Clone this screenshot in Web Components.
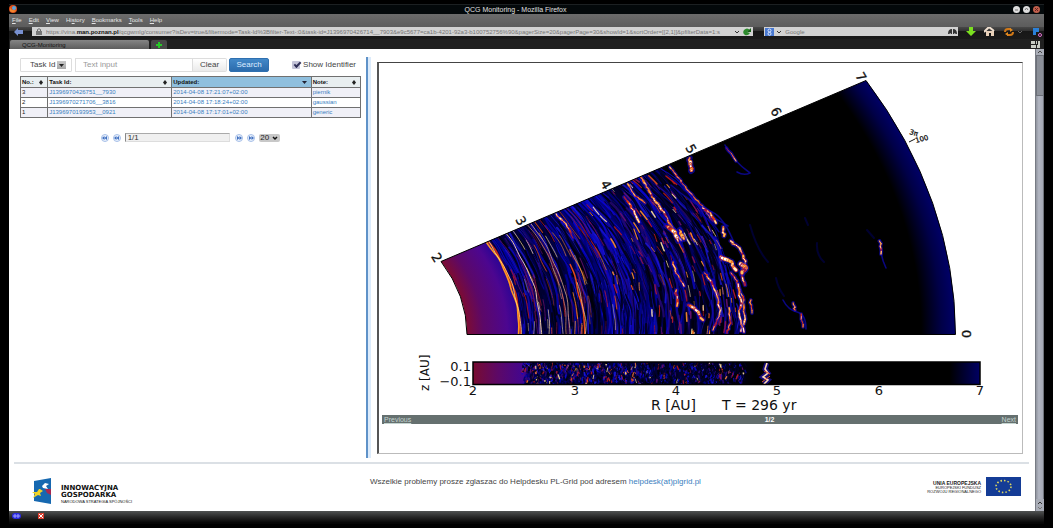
<!DOCTYPE html>
<html lang="en">
<head>
<meta charset="utf-8">
<title>QCG Monitoring - Mozilla Firefox</title>
<style>
html{height:100%;background:#000}
body{margin:0;min-height:100%;display:flex;background:#000;font-family:"Liberation Sans",Arial,sans-serif;font-size:8px;line-height:10px;color:#444}
qcg-window{flex:1}
</style>
</head>
<body>
<qcg-window>
  <qcg-titlebar slot="chrome">QCG Monitoring - Mozilla Firefox</qcg-titlebar>
  <qcg-menubar slot="chrome"></qcg-menubar>
  <qcg-navbar slot="chrome"></qcg-navbar>
  <qcg-tabs slot="chrome">QCG-Monitoring</qcg-tabs>
  <qcg-workspace>
    <qcg-search slot="side"></qcg-search>
    <qcg-tasks slot="side"></qcg-tasks>
    <qcg-pager slot="side"></qcg-pager>
    <qcg-gallery slot="main"><qcg-plot></qcg-plot></qcg-gallery>
  </qcg-workspace>
  <qcg-footer></qcg-footer>
  <qcg-scrollbar slot="scroll"></qcg-scrollbar>
  <qcg-status slot="status"></qcg-status>
</qcg-window>
<script>
const define = (name, html, setup) => customElements.define(name, class extends HTMLElement {
  constructor() {
    super();
    this.attachShadow({mode: 'open'}).innerHTML = '<style>*,:host{box-sizing:border-box}:host{display:block}a{color:#3a80c0;text-decoration:none}button,input,select{font:inherit;margin:0}svg{display:block}</style>' + html;
    if (setup) setup(this.shadowRoot);
  }
});

define('qcg-window', `<style>
:host{display:flex;flex-direction:column;padding:4px 9px 4px;background:#000;position:relative}
.body{flex:1;display:flex;background:#fff;min-height:0}
.page{flex:1;display:flex;flex-direction:column;min-width:0}
</style>
<slot name="chrome"></slot>
<div class="body"><div class="page"><slot></slot></div><slot name="scroll"></slot></div>
<slot name="status"></slot>`);

define('qcg-titlebar', `<style>
:host{display:flex;align-items:center;height:10px;background:#04090b;border-top:1px solid #1c2022;color:#e0e0e0;font-size:7px;line-height:8px}
h1{flex:1;margin:0;font:inherit;text-align:center}
.ctl{display:flex;gap:3px;padding-right:4px}
button{width:7px;height:7px;border:0;padding:0;border-radius:4px;background:#ddd;color:#555;line-height:0}
button.x{background:#c0604c}
</style>
<svg width="9" height="9" viewBox="0 0 9 9"><circle cx="4" cy="4" r="4" fill="#e0501c"/><circle cx="5" cy="3" r="2" fill="#58a8e0"/><path d="M1 2Q2 6 7 5Q5 9 1 6Z" fill="#f08830"/></svg>
<h1><slot></slot></h1>
<div class="ctl"><button aria-label="Minimize"><svg width="7" height="7"><path d="M2 4H5" stroke="#777"/></svg></button><button aria-label="Maximize"><svg width="7" height="7"><path d="M2 4L3.5 2L5 4" stroke="#777" fill="none"/></svg></button><button class="x" aria-label="Close"><svg width="7" height="7"><path d="M2 2L5 5M5 2L2 5" stroke="#622"/></svg></button></div>`);

define('qcg-menubar', `<style>
:host{display:block;height:13px;background:linear-gradient(#6c6c6c,#5c5c5c);color:#e4e4e4;font-size:6px}
nav{display:flex;gap:7px;padding:0 3px;line-height:11px;height:13px}
button{border:0;background:none;padding:0;color:inherit}
u{text-underline-offset:1px}
</style><nav><button><u>F</u>ile</button><button><u>E</u>dit</button><button><u>V</u>iew</button><button>Hi<u>s</u>tory</button><button><u>B</u>ookmarks</button><button><u>T</u>ools</button><button><u>H</u>elp</button></nav>`);

define('qcg-navbar', `<style>
:host{display:flex;align-items:center;height:12px;background:linear-gradient(#484848,#303030 35%,#171717 36%,#1a1a1a);padding:0 2px 3px 4px}
button{border:0;background:none;padding:0;line-height:0}
.field{display:flex;align-items:center;height:9px;background:#d2d2d2;color:#777;font-size:6px;line-height:8px;min-width:0}
.url{flex:721;margin-left:8px;padding:0 1px 0 4px;gap:4px}
.search{flex:193;margin-left:11px;padding:0 1px;gap:3px}
.addr{flex:1;min-width:0;white-space:nowrap;overflow:hidden;padding:0 3px 0 0}
.addr b{color:#111}
input{flex:1;min-width:0;border:0;background:none;padding:0;color:#777;height:8px}
.icons{display:flex;gap:8px;align-items:center;padding-left:8px}
</style>
<button aria-label="Back"><svg width="11" height="8" viewBox="0 0 11 8"><path d="M1 4L5 0V2H10V6H5V8Z" fill="#7890d0"/></svg></button>
<div class="field url"><svg width="6" height="7" viewBox="0 0 6 7"><path d="M1.500 3V1.500Q3 0 4.500 1.500V3" fill="none" stroke="#666"/><path d="M0 3H6V7H0Z" fill="#777"/></svg>
<div class="addr">https://vina.<b>man.poznan.pl</b>/qcgwmlg/consumer?isDev=true&amp;filtermode=Task-Id%3Bfilter-Text-:0&amp;task-id=J1396970426714__7903&amp;e9c5677=ca1b-4201-92a3-b100752756%90&amp;pagerSize=20&amp;pagerPage=30&amp;showId=1&amp;sortOrder=[[2,1]]&amp;pfilterData=1:s</div>
<svg width="18" height="8" viewBox="0 0 18 8"><path d="M1 3L3 5L5 3" fill="none" stroke="#333"/><path d="M16 2Q13-1 10 2Q8 5 11 7Q14 8 16 5L13 4Z" fill="#2c8a2c"/><path d="M17 0V4H13Z" fill="#166016"/></svg></div>
<div class="field search"><svg width="17" height="8" viewBox="0 0 17 8"><path d="M0 0H9V8H0Z" fill="#4878d0"/><circle cx="4.500" cy="2.500" r="1.500" fill="none" stroke="#dce8ff"/><circle cx="4.500" cy="5.800" r="1.500" fill="none" stroke="#dce8ff"/><path d="M12 3L14 5L16 3" fill="none" stroke="#333"/></svg><input aria-label="Search the web" value="Google"><svg width="9" height="7" viewBox="0 0 9 7"><path d="M0 6Q0 1 4 1V6H3Q2 4 1.500 6ZM9 6Q9 1 5 1V6H6Q7 4 7.500 6Z" fill="#333"/></svg></div>
<div class="icons">
<button aria-label="Downloads"><svg width="10" height="9" viewBox="0 0 10 9"><path d="M3 0H7V4H10L5 9L0 4H3Z" fill="#7be020"/></svg></button>
<button aria-label="Home"><svg width="12" height="9" viewBox="0 0 12 9"><path d="M2 4H10V9H7V6H5V9H2Z" fill="#e8d0b8"/><path d="M0 5L5 0L10 4" fill="none" stroke="#f0e0d0" stroke-width="2"/></svg></button>
<button aria-label="Refresh"><svg width="20" height="8" viewBox="0 0 20 8"><path d="M1 4Q1 1 4 1H7M9 4Q9 7 6 7H3" stroke="#d07818" stroke-width="2" fill="none"/><path d="M6 0L9 2L6 4ZM4 4L1 6L4 8Z" fill="#e08a20"/><path d="M14 3L16 5L18 3" stroke="#666" fill="none"/></svg></button>
<button aria-label="Add-on"><svg width="10" height="10" viewBox="0 0 10 10"><path d="M1 1H7V5H4V8H1Z" fill="#2a80d8"/><circle cx="8" cy="8" r="1.500" fill="none" stroke="#e070d0"/></svg></button>
</div>`);

define('qcg-tabs', `<style>
:host{display:flex;align-items:end;height:10px;background:#202020;padding:0 3px 0 1px;font-size:6px;color:#111}
.tab{flex:0 0 139px;height:9px;line-height:8px;padding:0 0 0 12px;text-align:left;border:0;background:linear-gradient(#858585,#5c5c5c);border-radius:2px 2px 0 0;color:inherit}
.add{width:16px;height:9px;margin-left:2px;border:0;padding:0 4px;background:#484848;border-radius:2px 2px 0 0}
.all{margin-left:auto}
</style><button class="tab"><slot></slot></button><button class="add" aria-label="New tab"><svg width="8" height="8"><path d="M4 1V7M1 4H7" stroke="#28c828" stroke-width="2"/></svg></button>
<svg class="all" width="10" height="8"><path d="M0 0H4V3H0ZM5 0H6V3H5ZM7 0H9V7H6V4H7ZM0 4H5V7H0Z" fill="#c8ccc4"/></svg>`);

define('qcg-scrollbar', `<style>
:host{display:flex;flex-direction:column;flex:0 0 9px;background:#8e929a;border-left:1px solid #777b84}
svg{background:#a8acb6}
.thumb{flex:0 0 41px;background:#8b8f98;border:1px solid #6c7078;border-width:1px 1px}
.track{flex:1;background:linear-gradient(90deg,#90949e,#b2b6c2 40%,#a4a8b4);border-right:1px solid #70747c}
</style><svg width="8" height="6"><path d="M2 4L4 2L6 4" stroke="#444" fill="none"/></svg><div class="thumb"></div><div class="track"></div><svg width="8" height="12"><path d="M2 5L4 3L6 5" stroke="#333" fill="none"/><path d="M2 8L4 10L6 8" stroke="#777" fill="none"/></svg>`);

define('qcg-status', `<style>
:host{display:flex;align-items:start;gap:16px;height:13px;padding:1px 3px;background:linear-gradient(#505252,#282828 45%,#060606 90%)}
</style><svg width="10" height="8" viewBox="0 0 10 8"><rect y="1" width="9" height="6" rx="3" fill="#2a2ae0"/><path d="M1 4H8M3 2V6M6 2V6" stroke="#a0a0ff"/></svg><svg width="6" height="8" viewBox="0 0 6 8"><rect y="1" width="6" height="6" fill="#d84030"/><path d="M1 2L5 6M5 2L1 6" stroke="#fff"/></svg>`);

define('qcg-workspace', `<style>
:host{display:grid;grid-template-columns:minmax(0,357fr) 5px minmax(0,664fr);flex:1;padding-top:8px}
.side{padding:1px 5px 0 11px}
.bar{background:linear-gradient(90deg,#5f92c8 2px,#dcebfb 2px);margin-bottom:4px}
.main{padding:5px 12px 8px 6px;display:flex;flex-direction:column}
</style><div class="side"><slot name="side"></slot></div><div class="bar"></div><div class="main"><slot name="main"></slot></div>`);

define('qcg-search', `<style>
form{display:flex;height:14px;font-size:8px}
.kind{display:flex;flex:0 0 52px;margin-right:3px;border:1px solid #ddd;border-radius:1px}
select{flex:1;min-width:0;appearance:none;border:0;padding:0 0 0 9px;color:#444;background:linear-gradient(#c8c8c8,#a8a8a8) right 5px center/9px 8px no-repeat;line-height:12px}
.kind{position:relative}
.kind svg{position:absolute;right:5px;top:2px;pointer-events:none}
.text{flex:1;min-width:0;border:1px solid #ddd;padding:0 7px}
.text::placeholder{color:#999}
button{border:1px solid #ddd;padding:0;line-height:12px}
.clear{flex:0 0 34px;border-left:0;background:linear-gradient(#fff,#eaeaea);color:#444;border-radius:0 2px 2px 0}
.go{flex:0 0 40px;margin-left:2px;border-color:#2f70b0;background:linear-gradient(#4288c8,#2b6bac);color:#dcecff;border-radius:2px}
label{display:flex;align-items:center;gap:3px;margin:0 5px 0 23px;white-space:nowrap}
input[type=checkbox]{appearance:none;width:8px;height:8px;background:#c4c4d8;border-radius:1px;display:grid}
input[type=checkbox]::after{content:"";width:5px;height:2px;border:solid #303058;border-width:0 0 2px 2px;transform:translate(2px,1px) rotate(-45deg)}
</style><form onsubmit="return false"><span class="kind"><select aria-label="Search field"><option>Task Id</option></select><svg width="9" height="8"><path d="M2 3H7L4.500 6Z" fill="#222"/></svg></span><input class="text" aria-label="Search text" placeholder="Text input"><button class="clear" type="reset">Clear</button><button class="go">Search</button><label><input type="checkbox" checked>Show Identifier</label></form>`);

define('qcg-tasks', `<style>
:host{margin-top:4px}
table{width:100%;border-collapse:collapse;table-layout:fixed;border:1px solid #2a3038;font-size:6px;line-height:9px}
th,td{height:10px;padding:0 1px;text-align:left;border:1px solid #707070;white-space:nowrap;overflow:hidden}
th{color:#111;background:#e8eef0;height:11px}
th.on{background:#8fbfde}
th div{display:flex;justify-content:space-between;align-items:center;padding-right:3px}
tbody tr:nth-child(odd){background:#f0f0f7}
td:first-child{color:#222}
</style><table><colgroup><col style="width:8%"><col style="width:36.500%"><col style="width:41%"><col></colgroup>
<thead><tr><th><div>No.:<svg width="4" height="5"><path d="M0 2.500L2 0L4 2.500L2 5Z" fill="#222"/></svg></div></th><th><div>Task Id:<svg width="4" height="5"><path d="M0 2.500L2 0L4 2.500L2 5Z" fill="#222"/></svg></div></th><th class="on"><div>Updated:<svg width="5" height="4"><path d="M0 1H5L2.500 4Z" fill="#223"/></svg></div></th><th><div>Note:<svg width="4" height="5"><path d="M0 2.500L2 0L4 2.500L2 5Z" fill="#222"/></svg></div></th></tr></thead>
<tbody><tr><td>3</td><td><a href="#">J1396970426751__7930</a></td><td><a href="#">2014-04-08 17:21:07+02:00</a></td><td><a href="#">piernik</a></td></tr>
<tr><td>2</td><td><a href="#">J1396970271706__3816</a></td><td><a href="#">2014-04-08 17:18:24+02:00</a></td><td><a href="#">gaussian</a></td></tr>
<tr><td>1</td><td><a href="#">J1396970193953__0921</a></td><td><a href="#">2014-04-08 17:17:01+02:00</a></td><td><a href="#">generic</a></td></tr></tbody></table>`);

define('qcg-pager', `<style>
:host{display:flex;justify-content:center;align-items:center;gap:4px;margin-top:15px}
button{width:8px;height:8px;border:1px solid #a8c0e8;border-radius:4px;padding:0;background:#e8f0fc;display:grid;place-items:center}
input{width:31%;height:9px;padding:0 2px;border:1px solid #ddd;border-left-color:#888;border-top-color:#aaa;background:#f0f0f0;font-size:8px;color:#333}
select{width:21px;height:8px;padding:0 1px;border:0;appearance:none;background:#c8c8c8;border-radius:2px;color:#222;line-height:8px}
.n{position:relative;display:flex}
.n svg{position:absolute;right:2px;top:1px;pointer-events:none}
.gap{margin-left:1px}
</style><button aria-label="First page"><svg width="5" height="4"><path d="M2.500 0V4L0 2ZM5 0V4L2.500 2Z" fill="#4070c0"/></svg></button><button aria-label="Previous page"><svg width="5" height="4"><path d="M2.500 0V4L0 2ZM5 0V4L2.500 2Z" fill="#4070c0"/></svg></button><input aria-label="Page" value="1/1"><button class="gap" aria-label="Next page"><svg width="5" height="4"><path d="M0 0V4L2.500 2ZM2.500 0V4L5 2Z" fill="#4070c0"/></svg></button><button aria-label="Last page"><svg width="5" height="4"><path d="M0 0V4L2.500 2ZM2.500 0V4L5 2Z" fill="#4070c0"/></svg></button><span class="n"><select aria-label="Rows per page"><option>20</option></select><svg width="6" height="6"><path d="M1 2L3 4L5 2" stroke="#111" fill="none" stroke-width="1.500"/></svg></span>`);

define('qcg-gallery', `<style>
:host{display:block;flex:1;border:1px solid #bbb;border-top-color:#444;border-left:2px solid #555;padding:5px 4px 0 3px}
.bar{display:grid;grid-template-columns:375fr auto 238fr;height:9px;line-height:9px;margin-top:1px;padding:0 2px;background:#65706f;color:#fff;font-size:7px}
.bar a{color:#c4d4d0;text-decoration:underline}
.bar a:last-child{text-align:right}
</style><slot></slot><div class="bar"><a href="#">Previous</a><b>1/2</b><a href="#">Next</a></div>`);

define('qcg-footer', `<style>
:host{display:grid;grid-template-columns:339fr auto 321fr;margin:0 6px 0 5px;border-top:2px solid #dbe0e5;min-height:49px;padding:13px 8px 0 18px}
.ig,.eu{display:flex;align-items:start}
.ig{gap:9px;color:#111;line-height:7px}
.ig p{margin:8px 0 0}
.ig b{display:block;font:bold 7px/7px "DejaVu Sans",sans-serif}
small{display:block;font-size:4px;line-height:5px}
.msg{margin:0;font-size:8px}
.eu{justify-content:end;gap:5px;color:#222;text-align:right}
.eu p{margin:4px 0 0;font-size:4px;line-height:4px}
.eu b{display:block;font-size:5px;line-height:5px}
</style>
<div class="ig"><svg width="20" height="27" viewBox="0 0 20 27"><path d="M2 4L19 1V27L2 24Z" fill="#1668b0"/><path d="M10 9L13 6L17 7L14 9L16 12L11 11Z" fill="#fff"/><path d="M8 12L11 14L8 16L9 19L6 18L1 21L3 17L0 15H5L7 12Z" fill="#f0d428"/><path d="M13 12H19V18L15 16Z" fill="#a82850"/></svg><p><b>INNOWACYJNA</b><b>GOSPODARKA</b><small>NARODOWA STRATEGIA SPÓJNOŚCI</small></p></div>
<p class="msg">Wszelkie problemy prosze zglaszac do Helpdesku PL-Grid pod adresem <a href="#">helpdesk(at)plgrid.pl</a></p>
<div class="eu"><p><b>UNIA EUROPEJSKA</b>EUROPEJSKI FUNDUSZ<br>ROZWOJU REGIONALNEGO</p><svg width="35" height="19" viewBox="0 0 35 19"><path d="M0 0H35V19H0Z" fill="#143c96"/><ellipse cx="17.500" cy="9.500" rx="7.500" ry="6" fill="none" stroke="#e0d860" stroke-width="1.600" stroke-dasharray="1.500 2.050"/></svg></div>`);

/* Disc density map: polar slice above, vertical cut below. */
define('qcg-plot', `<style>
svg{width:100%;height:auto}
text{font-family:"DejaVu Sans",sans-serif;fill:#111}
</style>
<svg viewBox="382 68 636 346" role="img" aria-label="Disc density map, T = 296 yr">
<defs>
<radialGradient id="g" gradientUnits="userSpaceOnUse" cx="0" cy="0" r="7" gradientTransform="translate(271.500 334) scale(97.700 73.500)">
<stop offset=".286" stop-color="#7c0c34"/><stop offset=".31" stop-color="#5c0868"/><stop offset=".345" stop-color="#4c0690"/><stop offset=".362" stop-color="#2c0494"/><stop offset=".372" stop-color="#000038"/><stop offset=".5" stop-color="#00004c"/><stop offset=".6" stop-color="#000028"/><stop offset=".68" stop-color="#000"/><stop offset=".95" stop-color="#000"/><stop offset=".98" stop-color="#000048"/><stop offset="1" stop-color="#000068"/></radialGradient>
<linearGradient id="h"><stop stop-color="#780c30"/><stop offset=".05" stop-color="#5c0868"/><stop offset=".1" stop-color="#420690"/><stop offset=".12" stop-color="#000040"/><stop offset=".45" stop-color="#000030"/><stop offset=".56" stop-color="#000"/><stop offset=".94" stop-color="#000"/><stop offset="1" stop-color="#000064"/></linearGradient>
<path id="w" d="M441 261.500L866 80.500A684 514.500 0 0 1 955.500 334.500H467A195.400 147 0 0 0 441 261.500Z"/>
<clipPath id="c"><use href="#w"/></clipPath><clipPath id="d"><path d="M473 362H980V384H473Z"/></clipPath>
</defs>
<use href="#w" fill="url(#g)"/>
<g id="arcs" clip-path="url(#c)" fill="none" stroke-linecap="round" stroke-linejoin="round"></g>
<use href="#w" fill="none" stroke="#000"/>
<path d="M473 362H980V384H473Z" fill="url(#h)"/>
<g id="cut" clip-path="url(#d)" fill="none"></g>
<path d="M473 362H980V384.500H473Z" fill="none" stroke="#000" stroke-width="1.500"/>
<g font-size="13" text-anchor="middle" stroke="#111" stroke-width=".3">
<text transform="translate(433 260) rotate(58)">2</text><text transform="translate(517 223) rotate(60)">3</text><text transform="translate(602 187) rotate(60)">4</text><text transform="translate(687 151) rotate(60)">5</text><text transform="translate(772 114) rotate(60)">6</text><text transform="translate(857 79) rotate(60)">7</text><text transform="translate(962 334) rotate(90)">0</text></g>
<g font-size="7" stroke="#111" stroke-width=".3"><text x="909" y="134" transform="rotate(15 909 134)">3π</text><text x="916" y="143" transform="rotate(-15 916 143)">100</text></g>
<path d="M909 142L915 139" stroke="#111"/>
<g font-size="13">
<g text-anchor="end"><text x="471" y="371">0.1</text><text x="471" y="386">−0.1</text></g>
<g text-anchor="middle"><text x="473" y="395">2</text><text x="575" y="395">3</text><text x="676" y="395">4</text><text x="777" y="395">5</text><text x="879" y="395">6</text><text x="980" y="395">7</text></g></g>
<g font-size="14"><text x="651" y="410">R [AU]</text><text x="722" y="410">T = 296 yr</text></g>
<text font-size="12" transform="translate(429 391) rotate(-90)">z [AU]</text>
</svg>`, root => {
  let seed = 7;
  const rnd = () => (seed = seed * 16807 % 2147483647) / 2147483647;
  const pick = a => a[Math.floor(rnd() * a.length)];
  const T = 0.514;
  const pt = (r, t) => (271.5 + 97.7 * r * Math.cos(t)).toFixed(1) + ' ' + (334 - 73.5 * r * Math.sin(t)).toFixed(1);
  const out = [];
  const line = (d, c, w, o = 1) => out.push(`<path d="${d}" stroke="${c}" stroke-width="${w}" opacity="${o}"/>`);
  /* One filament: an arc around radius r with two sine wobbles, clockwise from angle t. */
  const filament = (r, t, len, wob, c, w, o) => {
    const p1 = rnd() * 6, p2 = rnd() * 6, n = Math.max(4, Math.round(len * 60)), pts = [];
    const lean = 0.12 * Math.max(0, r - 3);
    for (let i = 0; i <= n; i++) {
      const a = t - len * i / n;
      const rr = r + lean * Math.sin((T - a) * 4) + wob * (Math.sin(a * 25 + p1) + .5 * Math.sin(a * 50 + p2));
      pts.push(pt(rr, a));
    }
    line('M' + pts.join('L'), c, w, o);
  };
  const dark = ['#000018', '#000008', '#00002c'], blue = ['#0000a8', '#0a06d0', '#000080', '#1408b0', '#1c18e0', '#00006c', '#280878'], hot = ['#c01a18', '#e85018', '#ff9028', '#ffe0a0', '#8a1050', '#b81830', '#6a1070'];
  for (let i = 0; i < 30; i++) filament(3.35 + rnd() * .5, T + .02, .56, .008, pick(['#0a08c8', '#1010e0', '#0000a0']), 1 + rnd() * 3, .6);
  for (let i = 0; i < 560; i++) {
    const r = 2.57 + 2.05 * rnd();
    filament(r, T * (rnd() * 1.25), .1 + rnd() * .28, .005 + .009 * (r - 2.5), pick(rnd() < .52 ? dark : blue), .6 + rnd() * 1.9, .75);
  }
  for (let i = 0; i < 90; i++) {
    const r = 2.58 + 1.0 * rnd();
    filament(r, T * (rnd() * 1.1), .03 + rnd() * .13, .006, pick(hot), .4 + rnd() * .7, .8);
  }
  for (let i = 0; i < 150; i++) {
    const r = 3.4 + 1.2 * Math.sqrt(rnd());
    filament(r, T * rnd() * 1.05, .008 + rnd() * .03, .015, pick(hot), .5 + rnd() * 1.1, .9);
  }
  [[2.55, '#d03010', 1.8], [2.535, '#ff9820', 1.6], [2.55, '#ffe080', .8], [2.76, '#ffd8b0', .9], [3.02, '#e09080', .7], [3.05, '#f0c0a0', .7]].forEach(a => filament(a[0], T + .02, .56, .006, a[1], a[2], 1));
  filament(3.18, .3, .32, .008, '#e84a18', 1.5, 1);
  filament(3.19, .22, .24, .008, '#ffd890', .7, 1);
  /* Bright shocks, traced in plot coordinates and roughened along their length. */
  const shocks = [
    ['641 176 647 187 651 195 658 204 665 214 670 224 681 240', 1.6],
    ['625 197 632 208 639 222', 1.6], ['666 226 675 232 678 241', 3], ['679 230 684 239', 3],
    ['627 184 636 196 645 203', 1], ['556 214 566 224 573 238', 1.2],
    ['689 158 692 168 691 171', 3], ['670 167 676 175 683 184 694 197 704 208 713 221', .7],
    ['703 208 710 213 716 223', 1.8], ['723 227 724 236', 2], ['730 241 739 248 745 261 742 273 745 285', 1.6],
    ['721 257 731 262 736 270', 3], ['741 264 746 268 742 273', 4], ['731 273 738 283 743 300 745 319 741 331', 1.5],
    ['738 284 741 303 739 313 744 332', 1.5], ['750 300 752 313', .8],
    ['705 273 712 282 718 299 720 313 713 330', 1.2], ['673 262 676 273 684 286', 1.2],
    ['689 305 696 310 703 320', 2.2], ['676 290 677 306', 1.6], ['729 308 730 323 727 333', 1],
    ['727 148 736 161', .5], ['880 241 881 254', .8], ['793 303 795 310', .8], ['801 314 803 327', .7]
  ];
  const extra = ['M725 145Q732 160 750 173Q744 176 737 172', 'M671 185Q680 193 690 200T712 212T735 245', 'M689 235Q700 250 707 272T722 315', 'M783 300Q788 310 797 312T806 329', 'M880 240Q880 256 886 268', 'M706 214Q715 218 728 226', 'M867 230L874 238', 'M776 278Q778 288 784 296M805 218L808 225', 'M750 225Q757 250 768 262M817 243Q816 255 824 262'];
  extra.forEach((d, i) => line(d, i > 5 ? '#00003c' : '#0c08a0', i > 5 ? 2 : 1.6, .8));
  shocks.forEach(([s, w]) => {
    const v = s.split(' ').map(Number), p = [];
    for (let i = 0; i < v.length - 2; i += 2) for (let k = 0; k < 5; k++) {
      const f = k / 5;
      p.push([v[i] + (v[i + 2] - v[i]) * f + (rnd() - .5) * 1.8, v[i + 1] + (v[i + 3] - v[i + 1]) * f]);
    }
    p.push(v.slice(-2));
    const s2 = p.map(q => q.map(n => n.toFixed(1)).join(' '));
    line('M' + s2.join('L'), '#1008c8', w + 3, .6);
    for (let i = 1; i < s2.length; i++) {
      const seg = 'M' + s2[i - 1] + 'L' + s2[i], k = .4 + rnd() * .8;
      line(seg, pick(['#d83414', '#a01840', '#f07820']), (w * k + .7).toFixed(1));
      if (rnd() < .75) line(seg, pick(['#fff0c8', '#ffffff', '#ffc060']), (w * k * .8).toFixed(1));
    }
  });
  root.getElementById('arcs').innerHTML = out.join('');
  out.length = 0;
  for (let i = 0; i < 1500; i++) {
    const u = rnd(), x = 523 + 222 * u, y = 362 + rnd() * 22, early = x < 640;
    const bright = rnd() < (early ? .2 : .07);
    line(`M${x.toFixed(1)} ${y.toFixed(1)}l${(rnd() * 4 - 2).toFixed(1)} ${(1 + rnd() * 4).toFixed(1)}`, bright ? pick(hot) : pick(rnd() < (early ? .5 : .65) ? dark : blue), (.6 + rnd() * 1.2).toFixed(1), .9);
  }
  line('M767 363L765 369L768 373L763 377L768 380L764 384', '#2010b0', 5, .7);
  line('M767 363L765 369L768 373L763 377L768 380L764 384', '#ffd8b0', 1.6);
  line('M762 382L770 376M764 371L770 374', '#d85030', 1);
  root.getElementById('cut').innerHTML = out.join('');
});
</script>
</body>
</html>
